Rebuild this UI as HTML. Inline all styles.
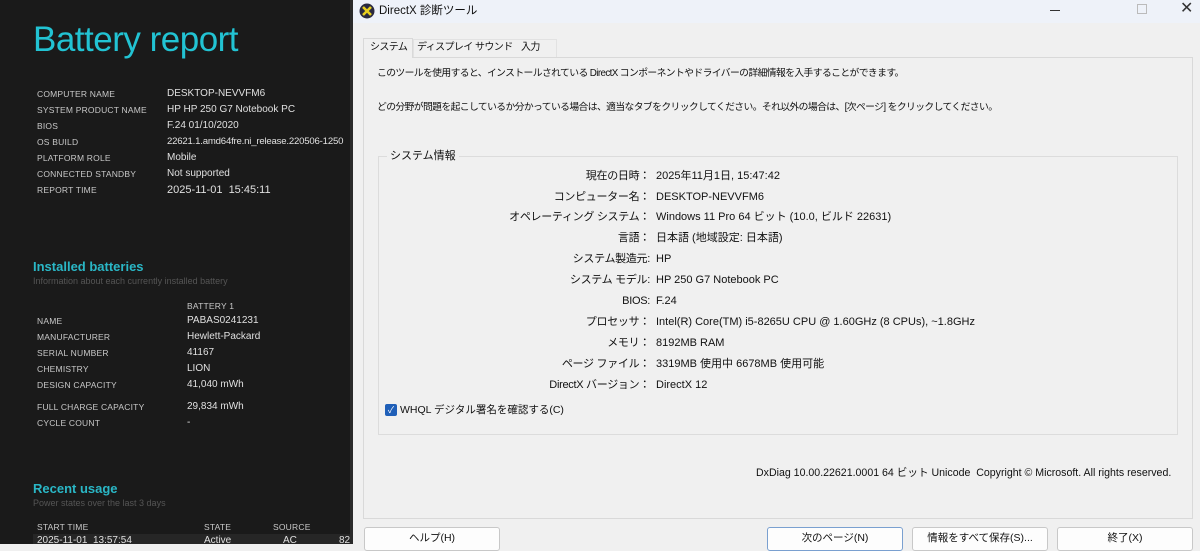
<!DOCTYPE html>
<html><head><meta charset="utf-8"><style>
*{margin:0;padding:0;box-sizing:border-box}
body{width:1200px;height:544px;overflow:hidden;position:relative;background:#f0f0f0;font-family:"Liberation Sans","Noto Sans CJK JP",sans-serif}
#left{position:absolute;left:0;top:0;width:350px;height:544px;background:#1a1a1a;color:#d8d8d8}
#left .a{position:absolute;font-size:8.5px;color:#c8c8c8;letter-spacing:.2px}
#left .v{position:absolute;font-size:10px;color:#e0e0e0}
#sep{position:absolute;left:350px;top:0;width:3px;height:544px;background:#2a2a2a}
.h{position:absolute;color:#2ab7c6;font-weight:bold}
.sub{position:absolute;font-size:9px;color:#555}
#dlg{position:absolute;left:353px;top:0;width:847px;height:544px;background:#f0f0f0;font-size:11px;color:#111}
#dlg div{line-height:14px}
#title{position:absolute;left:0;top:0;width:847px;height:23px;background:#eef2f9}
.t{position:absolute;white-space:nowrap}
.lab{position:absolute;right:550px;white-space:nowrap;text-align:right;letter-spacing:-.3px}
.val{position:absolute;left:303px;white-space:nowrap}
#dlg .btn{position:absolute;top:527px;height:24px;width:136px;border:1px solid #c8c8c8;border-radius:3px;background:#fdfdfd;text-align:center;font-size:10.5px;line-height:20px}
.tab{font-size:10px;letter-spacing:-.6px}
</style></head><body>
<div id="left">
<div class="h" style="left:33px;top:20px;font-size:35px;font-weight:normal;color:#22c3d3;letter-spacing:-.5px">Battery report</div>
<div class="a" style="left:37px;top:89px">COMPUTER NAME</div><div class="v" style="left:167px;top:88px">DESKTOP-NEVVFM6</div>
<div class="a" style="left:37px;top:105px">SYSTEM PRODUCT NAME</div><div class="v" style="left:167px;top:104px">HP HP 250 G7 Notebook PC</div>
<div class="a" style="left:37px;top:121px">BIOS</div><div class="v" style="left:167px;top:120px">F.24 01/10/2020</div>
<div class="a" style="left:37px;top:137px">OS BUILD</div><div class="v" style="left:167px;top:136px;font-size:9.6px;letter-spacing:-.2px">22621.1.amd64fre.ni_release.220506-1250</div>
<div class="a" style="left:37px;top:153px">PLATFORM ROLE</div><div class="v" style="left:167px;top:152px">Mobile</div>
<div class="a" style="left:37px;top:169px">CONNECTED STANDBY</div><div class="v" style="left:167px;top:168px">Not supported</div>
<div class="a" style="left:37px;top:185px">REPORT TIME</div><div class="v" style="left:167px;top:184px;font-size:11px">2025-11-01&nbsp; 15:45:11</div>
<div class="h" style="left:33px;top:259px;font-size:13px">Installed batteries</div>
<div class="sub" style="left:33px;top:276px">Information about each currently installed battery</div>
<div class="a" style="left:187px;top:301px">BATTERY 1</div>
<div class="a" style="left:37px;top:316px">NAME</div><div class="v" style="left:187px;top:315px">PABAS0241231</div>
<div class="a" style="left:37px;top:332px">MANUFACTURER</div><div class="v" style="left:187px;top:331px">Hewlett-Packard</div>
<div class="a" style="left:37px;top:348px">SERIAL NUMBER</div><div class="v" style="left:187px;top:347px">41167</div>
<div class="a" style="left:37px;top:364px">CHEMISTRY</div><div class="v" style="left:187px;top:363px">LION</div>
<div class="a" style="left:37px;top:380px">DESIGN CAPACITY</div><div class="v" style="left:187px;top:379px">41,040 mWh</div>
<div class="a" style="left:37px;top:402px">FULL CHARGE CAPACITY</div><div class="v" style="left:187px;top:401px">29,834 mWh</div>
<div class="a" style="left:37px;top:418px">CYCLE COUNT</div><div class="v" style="left:187px;top:417px">-</div>
<div class="h" style="left:33px;top:481px;font-size:13px">Recent usage</div>
<div class="sub" style="left:33px;top:498px">Power states over the last 3 days</div>
<div class="a" style="left:37px;top:522px">START TIME</div><div class="a" style="left:204px;top:522px">STATE</div><div class="a" style="left:273px;top:522px">SOURCE</div>
<div style="position:absolute;left:33px;top:534px;width:317px;height:10px;background:#262626"></div>
<div class="v" style="left:37px;top:535px">2025-11-01&nbsp; 13:57:54</div><div class="v" style="left:204px;top:535px">Active</div><div class="v" style="left:283px;top:535px">AC</div><div class="v" style="left:339px;top:535px">82</div>
</div>
<div id="sep"></div>
<div id="dlg">
<div id="title">
<svg style="position:absolute;left:6px;top:3px" width="16" height="16" viewBox="0 0 16 16"><circle cx="8" cy="8" r="7.5" fill="#2a2a40"/><path d="M4 4L12 12M12 4L4 12" stroke="#e8d020" stroke-width="2.6"/></svg>
<div class="t" style="left:26px;top:4px;font-size:11.5px">DirectX 診断ツール</div>
<div style="position:absolute;left:697px;top:10px;width:10px;height:1px;background:#333"></div>
<div style="position:absolute;left:784px;top:4px;width:10px;height:10px;border:1px solid #bbb"></div>
<div class="t" style="left:827px;top:2px;font-size:16px;color:#333">✕</div>
</div>
<div style="position:absolute;left:10px;top:57px;width:830px;height:462px;border:1px solid #d9d9d9;background:#f0f0f0"></div>
<div style="position:absolute;left:10px;top:38px;width:50px;height:20px;border:1px solid #d9d9d9;border-bottom:none;background:#f0f0f0"></div>
<div style="position:absolute;left:60px;top:39px;width:144px;height:18px;border:1px solid #e2e2e2;border-bottom:none"></div>
<div class="t tab" style="left:17px;top:41px">システム</div>
<div class="t tab" style="left:64px;top:41px">ディスプレイ</div>
<div class="t tab" style="left:122px;top:41px">サウンド</div>
<div class="t tab" style="left:168px;top:41px">入力</div>
<div class="t" style="left:24px;top:67px;font-size:9.8px;letter-spacing:-.6px">このツールを使用すると、インストールされている DirectX コンポーネントやドライバーの詳細情報を入手することができます。</div>
<div class="t" style="left:24px;top:101px;font-size:9.8px;letter-spacing:-.6px">どの分野が問題を起こしているか分かっている場合は、適当なタブをクリックしてください。それ以外の場合は、[次ページ] をクリックしてください。</div>
<div style="position:absolute;left:25px;top:156px;width:800px;height:279px;border:1px solid #dcdcdc"></div>
<div class="t" style="left:34px;top:149px;background:#f0f0f0;padding:0 3px">システム情報</div>
<div class="lab" style="top:169px">現在の日時：</div><div class="val" style="top:169px">2025年11月1日, 15:47:42</div>
<div class="lab" style="top:190px">コンピューター名：</div><div class="val" style="top:190px">DESKTOP-NEVVFM6</div>
<div class="lab" style="top:210px">オペレーティング システム：</div><div class="val" style="top:210px">Windows 11 Pro 64 ビット (10.0, ビルド 22631)</div>
<div class="lab" style="top:231px">言語：</div><div class="val" style="top:231px">日本語 (地域設定: 日本語)</div>
<div class="lab" style="top:252px">システム製造元:</div><div class="val" style="top:252px">HP</div>
<div class="lab" style="top:273px">システム モデル:</div><div class="val" style="top:273px">HP 250 G7 Notebook PC</div>
<div class="lab" style="top:294px">BIOS:</div><div class="val" style="top:294px">F.24</div>
<div class="lab" style="top:315px">プロセッサ：</div><div class="val" style="top:315px">Intel(R) Core(TM) i5-8265U CPU @ 1.60GHz (8 CPUs), ~1.8GHz</div>
<div class="lab" style="top:336px">メモリ：</div><div class="val" style="top:336px">8192MB RAM</div>
<div class="lab" style="top:357px">ページ ファイル：</div><div class="val" style="top:357px">3319MB 使用中 6678MB 使用可能</div>
<div class="lab" style="top:378px">DirectX バージョン：</div><div class="val" style="top:378px">DirectX 12</div>
<div style="position:absolute;left:32px;top:404px;width:12px;height:12px;border-radius:2px;background:#1f5fb8;color:#fff;font-size:9px;line-height:12px;text-align:center">✓</div>
<div class="t" style="left:47px;top:403px;font-size:10.5px">WHQL デジタル署名を確認する(C)</div>
<div class="t" style="left:403px;top:466px;font-size:10.6px">DxDiag 10.00.22621.0001 64 ビット Unicode&nbsp; Copyright © Microsoft. All rights reserved.</div>
<div class="btn" style="left:11px">ヘルプ(H)</div>
<div class="btn" style="left:414px;border-color:#7aa0d0">次のページ(N)</div>
<div class="btn" style="left:559px">情報をすべて保存(S)...</div>
<div class="btn" style="left:704px">終了(X)</div>
</div>
</body></html>
